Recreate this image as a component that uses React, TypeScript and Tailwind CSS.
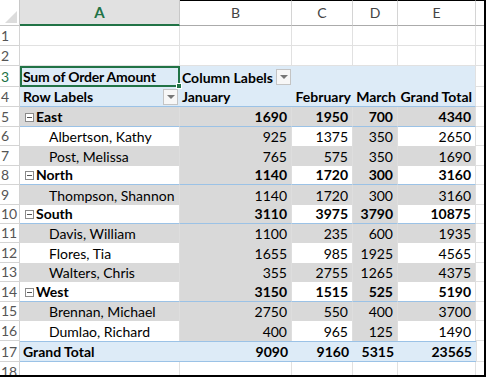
import React from "react";

type Kind = "region" | "item";

const data: { n: number; label: string; kind: Kind; vals: number[] }[] = [
  { n: 5, label: "East", kind: "region", vals: [1690, 1950, 700, 4340] },
  { n: 6, label: "Albertson, Kathy", kind: "item", vals: [925, 1375, 350, 2650] },
  { n: 7, label: "Post, Melissa", kind: "item", vals: [765, 575, 350, 1690] },
  { n: 8, label: "North", kind: "region", vals: [1140, 1720, 300, 3160] },
  { n: 9, label: "Thompson, Shannon", kind: "item", vals: [1140, 1720, 300, 3160] },
  { n: 10, label: "South", kind: "region", vals: [3110, 3975, 3790, 10875] },
  { n: 11, label: "Davis, William", kind: "item", vals: [1100, 235, 600, 1935] },
  { n: 12, label: "Flores, Tia", kind: "item", vals: [1655, 985, 1925, 4565] },
  { n: 13, label: "Walters, Chris", kind: "item", vals: [355, 2755, 1265, 4375] },
  { n: 14, label: "West", kind: "region", vals: [3150, 1515, 525, 5190] },
  { n: 15, label: "Brennan, Michael", kind: "item", vals: [2750, 550, 400, 3700] },
  { n: 16, label: "Dumlao, Richard", kind: "item", vals: [400, 965, 125, 1490] },
];

const heights = [
  "h-[20px]", "h-[19px]", "h-[20px]", "h-[19px]", "h-[20px]", "h-[19px]",
  "h-[19px]", "h-[20px]", "h-[19px]", "h-[20px]", "h-[19px]", "h-[20px]",
];

const valW = ["w-[112px]", "w-[61px]", "w-[45px]", "w-[78px]"];

const RowNum = ({ n, green }: { n: number; green?: boolean }) => (
  <div
    className={`w-[20px] shrink-0 border-r border-b border-[#d4d4d4] pl-[1px] flex items-end pb-[2px] text-[14px] leading-none ${
      green ? "text-[#217346]" : "text-[#555]"
    }`}
  >
    {n}
  </div>
);

const Dropdown = () => (
  <div className="w-[15px] h-[16px] border border-[#c4c4c4] bg-[#f7f7f7] flex items-center justify-center">
    <div className="w-0 h-0 border-l-[4px] border-r-[4px] border-t-[4px] border-l-transparent border-r-transparent border-t-[#777]" />
  </div>
);

const Collapse = () => (
  <div className="w-[9px] h-[9px] border border-[#8a8a8a] bg-white flex items-center justify-center mr-[2px]">
    <div className="w-[5px] h-px bg-[#555]" />
  </div>
);

const Empty = ({ n, h }: { n: number; h: string }) => (
  <div className={`flex ${h}`}>
    <RowNum n={n} />
    <div className="w-[160px] border-r border-b border-[#e1e1e1]" />
    <div className="w-[112px] border-r border-b border-[#e1e1e1]" />
    <div className="w-[61px] border-r border-b border-[#e1e1e1]" />
    <div className="w-[45px] border-r border-b border-[#e1e1e1]" />
    <div className="w-[78px] border-r border-b border-[#e1e1e1]" />
    <div className="w-[8px] border-b border-[#e1e1e1]" />
  </div>
);

export default function App() {
  return (
    <div className="w-[486px] h-[377px] overflow-hidden bg-white border-r-2 border-b-2 border-black font-['Lato',sans-serif] text-[14px] leading-[16px] text-black">
      {/* column headers */}
      <div className="flex h-[26px]">
        <div className="w-[20px] border-r border-b border-[#c8c8c8] flex items-end justify-end pr-[2px] pb-[2px]">
          <svg width="12" height="12" viewBox="0 0 12 12">
            <polygon points="12,0 12,12 0,12" fill="#dcdcdc" />
          </svg>
        </div>
        <div className="w-[160px] bg-[#e1e1e1] border-r border-[#c8c8c8] border-b-2 border-b-[#217346] flex items-center justify-center text-[#217346] text-[15px] font-bold">
          A
        </div>
        {["B", "C", "D", "E"].map((c, i) => (
          <div
            key={c}
            className={`${valW[i]} border-r border-b border-[#d4d4d4] border-b-[#ababab] border-t border-t-black flex items-center justify-center text-[#444] text-[14px]`}
          >
            {c}
          </div>
        ))}
        <div className="w-[8px] border-b border-t border-b-[#ababab] border-t-black" />
      </div>

      <Empty n={1} h="h-[20px]" />
      <Empty n={2} h="h-[20px]" />

      {/* row 3 */}
      <div className="flex h-[21px]">
        <RowNum n={3} green />
        <div className="relative w-[160px] bg-[#ddebf7] border-2 border-[#217346] flex items-end pl-[1px] font-bold tracking-[-0.2px]">
          Sum of Order Amount
          <div className="absolute -right-[4px] -bottom-[4px] w-[6px] h-[6px] bg-[#217346] border border-white z-10" />
        </div>
        <div className="w-[112px] bg-[#ddebf7] flex items-end gap-[3px] pl-[2px] pb-[1px] font-bold">
          Column Labels
          <div className="mb-[1px]">
            <Dropdown />
          </div>
        </div>
        <div className="w-[61px] bg-[#ddebf7]" />
        <div className="w-[45px] bg-[#ddebf7]" />
        <div className="w-[78px] bg-[#ddebf7] border-r border-[#e1e1e1]" />
        <div className="w-[8px] border-b border-[#e1e1e1]" />
      </div>

      {/* row 4 */}
      <div className="flex h-[20px]">
        <RowNum n={4} />
        <div className="w-[160px] bg-[#ddebf7] border-b border-[#9bc2e6] flex items-end justify-between pl-[3px] pr-[2px] font-bold">
          <span className="pb-[1px]">Row Labels</span>
          <div className="mb-[1px]">
            <Dropdown />
          </div>
        </div>
        <div className="w-[112px] bg-[#ddebf7] border-b border-[#9bc2e6] flex items-end pl-[2px] pb-[1px] font-bold">January</div>
        <div className="w-[61px] bg-[#ddebf7] border-b border-[#9bc2e6] flex items-end justify-end pr-[2px] pb-[1px] font-bold">February</div>
        <div className="w-[45px] bg-[#ddebf7] border-b border-[#9bc2e6] flex items-end justify-end pr-[2px] pb-[1px] font-bold">March</div>
        <div className="w-[78px] bg-[#ddebf7] border-b border-r border-[#9bc2e6] border-r-[#e1e1e1] flex items-end justify-end pr-[3px] pb-[1px] font-bold">Grand Total</div>
        <div className="w-[8px] border-b border-[#e1e1e1]" />
      </div>

      {data.map((r, ri) => {
        const banded = r.n % 2 === 1;
        const region = r.kind === "region";
        const line = region ? "border-b border-b-[#9bc2e6]" : "";
        return (
          <div key={r.n} className={`flex ${heights[ri]}`}>
            <RowNum n={r.n} />
            <div
              className={`w-[160px] border-r border-[#dedede] flex items-end pb-[1px] ${line} ${
                banded ? "bg-[#d9d9d9]" : "bg-white"
              } ${region ? "pl-[5px] font-bold" : "pl-[29px]"}`}
            >
              {region && (
                <div className="mb-[3px]">
                  <Collapse />
                </div>
              )}
              {r.label}
            </div>
            {r.vals.map((v, i) => {
              const gray = banded || i === 0 || i === 2;
              return (
                <div
                  key={i}
                  className={`${valW[i]} border-r border-[#dedede] flex items-end justify-end pr-[4px] pb-[1px] ${line} ${
                    gray ? "bg-[#d9d9d9]" : "bg-white"
                  } ${region ? "font-bold" : ""}`}
                >
                  {v}
                </div>
              );
            })}
            <div className="w-[8px] border-b border-[#e1e1e1]" />
          </div>
        );
      })}

      {/* row 17 */}
      <div className="flex h-[21px]">
        <RowNum n={17} />
        <div className="w-[160px] bg-[#ddebf7] border-t border-b border-[#9bc2e6] flex items-end pl-[3px] pb-[1px] font-bold">Grand Total</div>
        {[9090, 9160, 5315, 23565].map((v, i) => (
          <div
            key={i}
            className={`${valW[i]} bg-[#ddebf7] border-t border-b border-[#9bc2e6] flex items-end justify-end pr-[4px] pb-[1px] font-bold`}
          >
            {v}
          </div>
        ))}
        <div className="w-[8px] border-b border-l border-[#e1e1e1]" />
      </div>

      <Empty n={18} h="h-[20px]" />
    </div>
  );
}
